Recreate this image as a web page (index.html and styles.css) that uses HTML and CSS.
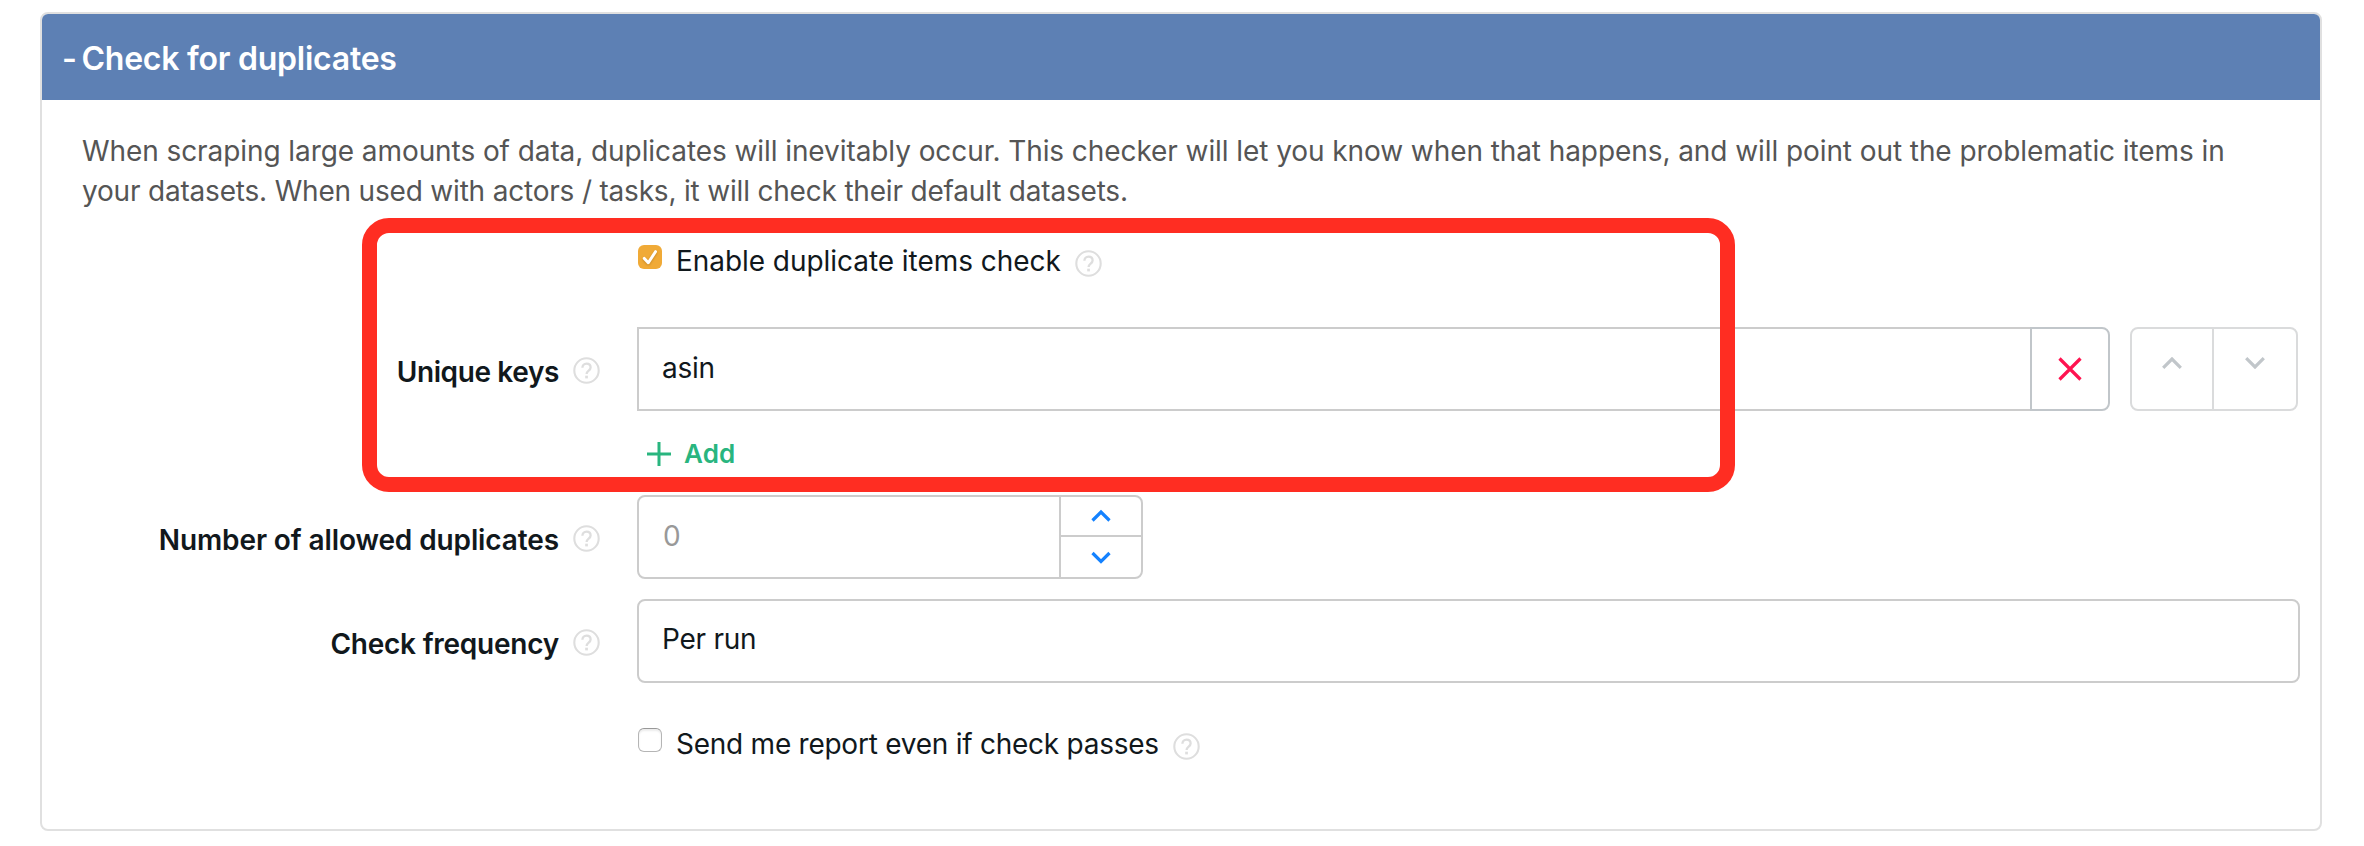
FILE: index.html
```
<!DOCTYPE html>
<html lang="en">
<head>
<meta charset="utf-8">
<title>Check for duplicates</title>
<link rel="stylesheet" href="styles.css">
</head>
<body>
<svg class="symbols" aria-hidden="true">
  <symbol id="help" viewBox="0 0 27 27">
    <circle cx="13.5" cy="13.5" r="12.2" fill="none" stroke="currentColor" stroke-width="2.1"/>
    <path d="M9.4 10.8C9.4 8.3 11.1 6.6 13.5 6.6s4.1 1.6 4.1 3.8c0 3.1-4 3.3-4 6.6" fill="none" stroke="currentColor" stroke-width="2.3"/>
    <rect x="12.2" y="18.7" width="2.7" height="2.7" fill="currentColor"/>
  </symbol>
</svg>
<main class="panel">
  <h2 class="panel-header"><span class="toggle">-</span> Check for duplicates</h2>
  <div class="panel-body">
    <p class="intro"><span class="intro-first">When scraping large amounts of data, duplicates will inevitably occur. This checker will let you know when that happens, and will point out the problematic items in</span><br><span class="intro-second">your datasets. When used with actors / tasks, it will check their default datasets.</span></p>

    <div class="check-row enable-row">
      <span class="checkbox checked"><svg width="24" height="24" viewBox="0 0 24 24"><path d="M6.3 13.4l4 4.3 7.2-11" fill="none" stroke="#fff" stroke-width="3" stroke-linecap="round" stroke-linejoin="round"/></svg></span>
      <span class="check-text enable-text">Enable duplicate items check</span>
      <svg class="help"><use href="#help"/></svg>
    </div>

    <div class="field-row keys-row">
      <div class="label keys-label"><span class="unique">Unique keys</span><svg class="help"><use href="#help"/></svg></div>
      <div class="keys">
        <div class="key-input asin">asin</div>
        <div class="remove"><svg width="24" height="24" viewBox="0 0 24 24"><path d="M1.5 1.5l21 21M22.5 1.5l-21 21" fill="none" stroke="#ff1350" stroke-width="3.2"/></svg></div>
        <div class="order">
          <div class="order-button"><svg width="20" height="12" viewBox="0 0 20 12"><path d="M1.2 10.8L10 2l8.8 8.8" fill="none" stroke="#c1c6ca" stroke-width="3.2"/></svg></div>
          <div class="order-button"><svg width="20" height="12" viewBox="0 0 20 12"><path d="M1.2 1.2L10 10l8.8-8.8" fill="none" stroke="#c1c6ca" stroke-width="3.2"/></svg></div>
        </div>
      </div>
    </div>

    <div class="add"><svg width="24" height="24" viewBox="0 0 24 24"><path d="M12 0v24M0 12h24" fill="none" stroke="#29b57f" stroke-width="3"/></svg><span>Add</span></div>

    <div class="field-row number-row">
      <div class="label number-label"><span class="number">Number of allowed duplicates</span><svg class="help"><use href="#help"/></svg></div>
      <div class="stepper">
        <div class="stepper-value">0</div>
        <div class="stepper-buttons">
          <div class="step step-up"><svg width="20" height="14" viewBox="0 0 20 14"><path d="M1.5 11.5L10 3l8.5 8.5" fill="none" stroke="#1482ff" stroke-width="3.2"/></svg></div>
          <div class="step step-down"><svg width="20" height="14" viewBox="0 0 20 14"><path d="M1.5 2L10 10.5 18.5 2" fill="none" stroke="#1482ff" stroke-width="3.2"/></svg></div>
        </div>
      </div>
    </div>

    <div class="field-row frequency-row">
      <div class="label frequency-label"><span class="frequency">Check frequency</span><svg class="help"><use href="#help"/></svg></div>
      <div class="select">Per run</div>
    </div>

    <div class="check-row report-row">
      <span class="checkbox"></span>
      <span class="check-text report-text">Send me report even if check passes</span>
      <svg class="help"><use href="#help"/></svg>
    </div>
  </div>
  <div class="highlight"></div>
</main>
</body>
</html>
```
FILE: styles.css
```
* { box-sizing: border-box; }
body {
  margin: 0;
  padding: 12px 42px 0 40px;
  background: #fff;
  color: #11181c;
  font: 400 28px/40px Inter, "Liberation Sans", sans-serif;
}
svg { display: block; flex: none; }
.symbols { position: absolute; width: 0; height: 0; }

.panel {
  position: relative;
  height: 819px;
  border: 2px solid #e0e0e0;
  border-radius: 8px;
}
.panel-header {
  margin: 0;
  height: 86px;
  padding: 3px 0 0 20px;
  border-radius: 6px 6px 0 0;
  background: #5d80b4;
  color: #fff;
  font-size: 32px;
  font-weight: 600;
  line-height: 83px;
  letter-spacing: -0.24px;
}
.toggle { margin-right: -3px; }
.panel-body { padding: 31px 20px 0 0; }
.intro {
  margin: 0 0 0 40px;
  color: #555;
  white-space: nowrap;
}
.intro-first { letter-spacing: -0.078px; }
.intro-second { letter-spacing: -0.192px; }

.check-row {
  display: flex;
  align-items: flex-start;
  margin-left: 596px;
  height: 40px;
}
.check-row .help { margin-top: 10px; }
.enable-row { margin-top: 29px; }
.report-row { margin-top: 40px; }
.checkbox {
  width: 24px;
  height: 24px;
  margin: 5px 14px 0 0;
  border: 1.5px solid #b5b5b5;
  border-top-color: #989898;
  border-radius: 6px;
  background: #fff;
  box-shadow: inset 0 2px 2px #ececec;
}
.checkbox.checked { border: 0; background: #f0aa37; box-shadow: none; }
.checked path { filter: drop-shadow(0 1px 1px rgba(120, 70, 0, .35)); }
.check-text { padding-top: 1px; white-space: nowrap; }
.enable-text { width: 399px; letter-spacing: -0.05px; }
.report-text { width: 497px; letter-spacing: -0.25px; }

.help { width: 27px; height: 27px; color: #dedede; }

.field-row {
  display: grid;
  grid-template-columns: 558px 1fr;
  column-gap: 37px;
  height: 84px;
}
.keys-row { margin-top: 47px; }
.number-row { margin-top: 21px; }
.frequency-row { margin-top: 20px; }
.label {
  display: flex;
  align-items: center;
  justify-content: flex-end;
  gap: 14px;
  padding-top: 5px;
  font-weight: 600;
  white-space: nowrap;
}
.label .help { margin-bottom: 2px; }
.keys-label { padding-top: 5px; }
.unique { letter-spacing: -0.38px; }
.number { letter-spacing: -0.11px; }
.frequency { letter-spacing: -0.24px; }

.keys { display: flex; }
.key-input {
  flex: 1;
  border: 2px solid #ccc;
  border-right: 0;
  padding: 19px 23px;
}
.asin { letter-spacing: -0.3px; }
.remove {
  display: flex;
  align-items: center;
  justify-content: center;
  width: 80px;
  border: 2px solid #c1c6ca;
  border-radius: 0 8px 8px 0;
}
.order {
  display: flex;
  width: 168px;
  margin: 0 2px 0 20px;
  border: 2px solid #dadbdc;
  border-radius: 8px;
}
.order-button {
  display: flex;
  justify-content: center;
  width: 81px;
  padding-top: 28px;
}
.order-button + .order-button { width: 85px; border-left: 2px solid #dadbdc; }

.add {
  display: flex;
  align-items: center;
  gap: 13px;
  height: 40px;
  margin: 23px 0 0 605px;
  color: #29b57f;
  font-size: 26px;
  font-weight: 600;
  letter-spacing: 0.12px;
}

.stepper {
  display: flex;
  width: 506px;
  border: 2px solid #ccc;
  border-radius: 8px;
}
.stepper-value { flex: 1; padding: 19px 24px; color: #999; }
.stepper-buttons { width: 82px; border-left: 2px solid #ccc; }
.step { display: flex; justify-content: center; height: 40px; }
.step-up { border-bottom: 2px solid #ccc; padding-top: 12px; }
.step-down { padding-top: 14px; }

.select {
  border: 2px solid #ccc;
  border-radius: 8px;
  padding: 18px 23px;
  letter-spacing: -0.26px;
}

/* Callout drawn over the form */
.highlight {
  position: absolute;
  left: 320px;
  top: 204px;
  width: 1373px;
  height: 274px;
  border: 15px solid #ff2d22;
  border-radius: 27px;
}
```
